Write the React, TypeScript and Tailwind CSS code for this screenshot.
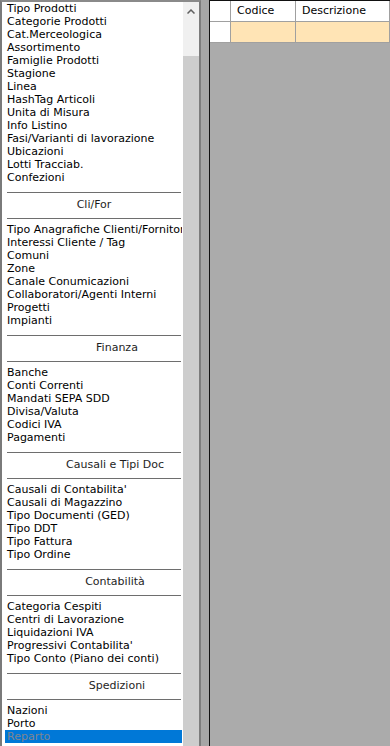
import React from 'react';

type Entry = { kind: 'item'; label: string; selected?: boolean } | { kind: 'head'; label: string; shift?: string };

const groups: { head?: string; shift?: string; items: string[] }[] = [
  {
    items: [
      'Tipo Prodotti',
      'Categorie Prodotti',
      'Cat.Merceologica',
      'Assortimento',
      'Famiglie Prodotti',
      'Stagione',
      'Linea',
      'HashTag Articoli',
      'Unita di Misura',
      'Info Listino',
      'Fasi/Varianti di lavorazione',
      'Ubicazioni',
      'Lotti Tracciab.',
      'Confezioni',
    ],
  },
  {
    head: 'Cli/For',
    shift: 'pr-[42px]',
    items: [
      'Tipo Anagrafiche Clienti/Fornitori',
      'Interessi Cliente / Tag',
      'Comuni',
      'Zone',
      'Canale Conumicazioni',
      'Collaboratori/Agenti Interni',
      'Progetti',
      'Impianti',
    ],
  },
  {
    head: 'Finanza',
    shift: 'pl-[4px]',
    items: ['Banche', 'Conti Correnti', 'Mandati SEPA SDD', 'Divisa/Valuta', 'Codici IVA', 'Pagamenti'],
  },
  {
    head: 'Causali e Tipi Doc',
    items: [
      "Causali di Contabilita'",
      'Causali di Magazzino',
      'Tipo Documenti (GED)',
      'Tipo DDT',
      'Tipo Fattura',
      'Tipo Ordine',
    ],
  },
  {
    head: 'Contabilità',
    items: [
      'Categoria Cespiti',
      'Centri di Lavorazione',
      'Liquidazioni IVA',
      "Progressivi Contabilita'",
      'Tipo Conto (Piano dei conti)',
    ],
  },
  {
    head: 'Spedizioni',
    shift: 'pl-[4px]',
    items: ['Nazioni', 'Porto', 'Reparto'],
  },
];

const entries: Entry[] = [];
groups.forEach((g) => {
  if (g.head) entries.push({ kind: 'head', label: g.head, shift: g.shift });
  g.items.forEach((it) => entries.push({ kind: 'item', label: it, selected: it === 'Reparto' }));
});

const font = { fontFamily: '"DejaVu Sans", "Liberation Sans", sans-serif' };

// group caption: line / centred text / line, three rows tall
const Header: React.FC<{ label: string; shift?: string }> = ({ label, shift }) => (
  <div className="h-[39px] pt-[8px]">
    <div className="h-px ml-[2px] mr-[1px] bg-[#6e6e6e]" />
    <div className={`w-[220px] h-[25px] flex items-center justify-center text-[#1e1e1e] whitespace-nowrap ${shift ?? ''}`}>
      {label}
    </div>
    <div className="h-px ml-[2px] mr-[1px] bg-[#6e6e6e]" />
  </div>
);

const App: React.FC = () => {
  return (
    <div className="w-[390px] h-[746px] flex bg-[#a0a0a0] overflow-hidden text-[11px]" style={font}>
      {/* Left list */}
      <div className="w-[201px] h-full flex border-l-2 border-t-2 border-r-2 border-l-[#7a7a7a] border-t-[#8a8a8a] border-r-[#7c7c7c] bg-white">
        <div className="w-[181px] pl-[3px] pr-px overflow-hidden">
          {entries.map((e, i) =>
            e.kind === 'head' ? (
              <Header key={i} label={e.label} shift={e.shift} />
            ) : (
              <div
                key={i}
                className={`h-[13px] leading-[13px] pl-[2px] whitespace-nowrap overflow-hidden ${
                  e.selected ? 'bg-[#0078d7] text-[#7f8590]' : 'text-black'
                }`}
              >
                {e.label}
              </div>
            )
          )}
        </div>
        {/* Scrollbar */}
        <div className="w-[16px] h-full flex flex-col bg-[#f0f0f0]">
          <div className="h-[18px] flex items-center justify-center">
            <svg width="8" height="5" viewBox="0 0 8 5">
              <polyline points="0.5,4.5 4,1 7.5,4.5" fill="none" stroke="#606060" strokeWidth="1.5" />
            </svg>
          </div>
          <div className="h-[36px]" />
          <div className="flex-1 bg-[#cdcdcd]" />
        </div>
      </div>

      {/* Splitter */}
      <div className="w-[8px] h-full bg-[#a6a6a6]" />

      {/* Right grid panel */}
      <div className="flex-1 h-full border-l border-t border-[#111] bg-[#ababab]">
        <div className="flex h-[21px] border-b border-[#a0a0a0]">
          <div className="w-[21px] bg-white border-r border-[#a0a0a0]" />
          <div className="w-[65px] bg-white border-r border-[#a0a0a0] pl-[6px] flex items-center text-black">Codice</div>
          <div className="w-[94px] bg-white border-r border-[#a0a0a0] pl-[6px] flex items-center text-black">Descrizione</div>
        </div>
        <div className="flex h-[21px]">
          <div className="w-[21px] bg-white border-r border-b border-[#a0a0a0]" />
          <div className="w-[65px] bg-[#ffe4b5] border-r border-b border-[#a0a0a0]" />
          <div className="w-[94px] bg-[#ffe4b5] border-r border-b border-[#a0a0a0]" />
        </div>
      </div>
    </div>
  );
};

export default App;
